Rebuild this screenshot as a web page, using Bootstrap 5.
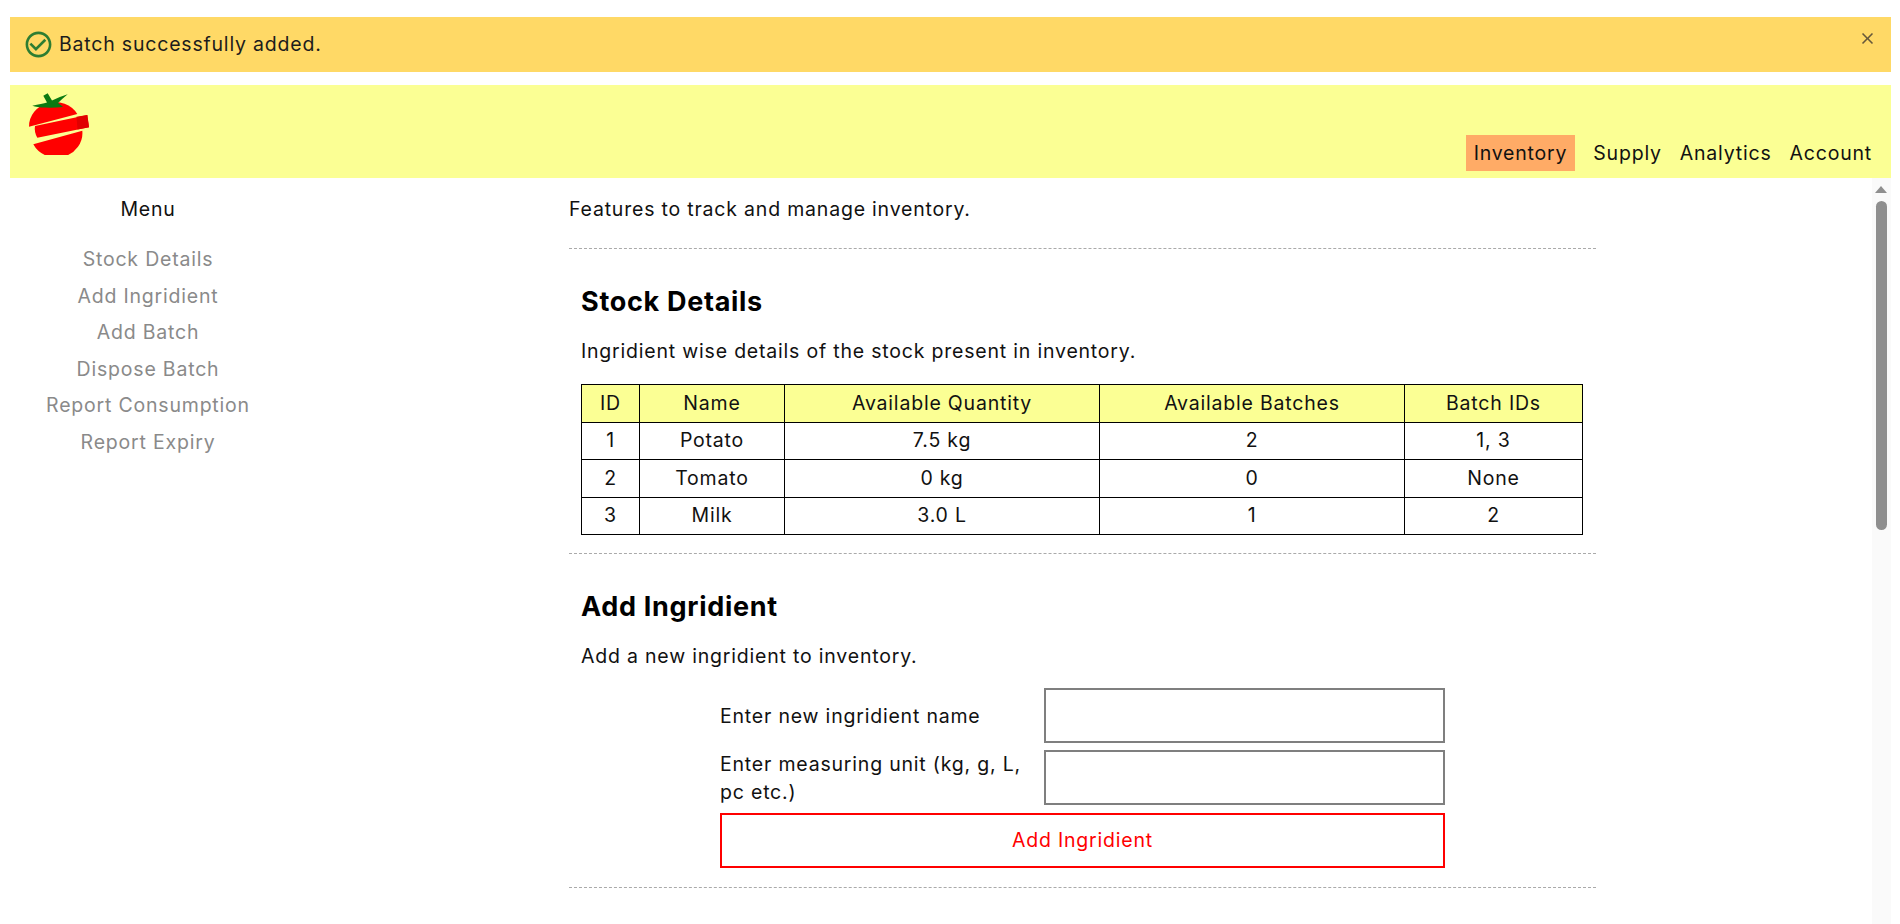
<!DOCTYPE html>
<html lang="en">
<head>
    <meta charset="UTF-8">
    <meta name="viewport" content="width=device-width, initial-scale=1.0">
    <title>Inventory</title>
    <link href="https://cdn.jsdelivr.net/npm/bootstrap@5.3.0/dist/css/bootstrap.min.css" rel="stylesheet">
    <style>
        html, body {
            height: 100%;
        }
        body {
            font-family: "Inter", "Open Sans", sans-serif;
            font-size: 19.5px;
            letter-spacing: .8px;
            color: #111;
            background-color: #fff;
            overflow: hidden;
        }
        .page-wrap {
            height: 100vh;
            padding: 17px 9px 0 10px;
        }
        .notice-bar {
            height: 55px;
            margin-bottom: 13px;
            padding: 0 15px;
            background-color: #ffd966;
            border: 0;
            border-radius: 0;
            color: #1c1c1c;
        }
        .notice-close {
            border: 0;
            padding: 0;
            background: none;
            line-height: 0;
            margin-top: -12px;
            margin-right: -1px;
        }
        .top-bar {
            height: 93px;
            padding: 0 11px 7px 0;
            background-color: #fbff94;
        }
        .logo-box {
            margin: 6px 0 0 17px;
        }
        .top-link {
            display: block;
            height: 36px;
            line-height: 36px;
            padding: 0 8px;
            margin-left: 2px;
            color: #111;
            text-decoration: none;
        }
        .top-link.is-current {
            background-color: #ffab66;
            margin-right: 8px;
        }
        .side-menu {
            width: 276px;
            padding-top: 17px;
        }
        .side-title {
            line-height: 28px;
            margin-bottom: 18px;
        }
        .side-link {
            display: block;
            height: 36.6px;
            line-height: 36.6px;
            color: #8a8a8a;
            text-decoration: none;
        }
        .pane-inner {
            width: 1027px;
            margin-left: 283px;
            padding-top: 17px;
        }
        .intro-line {
            line-height: 28px;
            margin: 0 0 25px;
        }
        .stock-block {
            border-top: 1px dashed #aaa;
            padding: 0 12px;
        }
        .stock-block h2 {
            font-family: inherit;
            font-size: 27px;
            font-weight: 700;
            line-height: 32px;
            letter-spacing: .7px;
            color: #000;
            margin: 37px 0 0;
        }
        .block-note {
            line-height: 28px;
            margin: 19px 0 19px;
        }
        .stock-table {
            width: 1001px;
            margin: 0 0 18px;
            table-layout: fixed;
            border-color: #000;
            font-size: inherit;
        }
        .stock-table th, .stock-table td {
            padding: 0;
            height: 37.5px;
            vertical-align: middle;
            text-align: center;
            font-weight: 400;
            color: #111;
            border-color: #000;
        }
        .stock-table thead th {
            background-color: #fbff94;
        }
        .entry-grid {
            display: grid;
            grid-template-columns: 324px 1fr;
            row-gap: 7px;
            width: 725px;
            margin: -1px 0 19px 139px;
        }
        .entry-label {
            line-height: 28px;
            margin: 0;
            padding-right: 10px;
            align-self: center;
        }
        .entry-input {
            height: 55px;
            border: 2px solid #7f7f7f;
            border-radius: 0;
        }
        .entry-submit {
            grid-column: 1 / 3;
            height: 55px;
            border: 2px solid #f00;
            border-radius: 0;
            color: #f00;
            background-color: #fff;
            font-size: inherit;
            letter-spacing: inherit;
        }
        .fake-scrollbar {
            width: 19px;
            background-color: #fafafa;
        }
        .scroll-up {
            width: 0;
            margin: 8px 0 8px 3px;
            border-left: 6.5px solid transparent;
            border-right: 6.5px solid transparent;
            border-bottom: 7px solid #8f8f8f;
        }
        .scroll-thumb {
            width: 11px;
            height: 329px;
            margin-left: 4px;
            background-color: #8f8f8f;
            border-radius: 6px;
        }
    </style>
</head>
<body>
    <div class="page-wrap d-flex flex-column">
        <div class="alert notice-bar d-flex align-items-center gap-2 flex-shrink-0" role="alert">
            <svg width="31" height="31" viewBox="0 0 24 24" fill="#2e7d32" class="flex-shrink-0" style="margin-left:-2px">
                <path d="M16.59 7.58 10 14.17l-3.59-3.58L5 12l5 5 8-8zM12 2C6.48 2 2 6.48 2 12s4.48 10 10 10 10-4.48 10-10S17.52 2 12 2zm0 18c-4.42 0-8-3.58-8-8s3.58-8 8-8 8 3.58 8 8-3.58 8-8 8z"/>
            </svg>
            <span class="flex-grow-1" style="margin-left:-3px">Batch successfully added.</span>
            <button type="button" class="notice-close" aria-label="Close">
                <svg width="19" height="19" viewBox="0 0 24 24" fill="#66583a">
                    <path d="M19 6.41 17.59 5 12 10.59 6.41 5 5 6.41 10.59 12 5 17.59 6.41 19 12 13.41 17.59 19 19 17.59 13.41 12z"/>
                </svg>
            </button>
        </div>

        <nav class="top-bar d-flex align-items-end justify-content-between flex-shrink-0">
            <div class="logo-box align-self-start">
                <svg width="66" height="64" viewBox="0 0 66 64">
                    <path d="M2 35.7A26 24.5 0 0 1 50.3 23Z" fill="#f00"/>
                    <path d="M8 35 60.3 24 62 36.3 10.3 46.7Q7 41 8 35Z" fill="#f00"/>
                    <path d="M49.5 25.7 60.3 24 62 36.3 50.5 38.6Z" fill="#e00000"/>
                    <path d="M6.3 53.3 55.3 39.7A26 24.5 0 0 1 6.3 53.3Z" fill="#f00"/>
                    <path d="M5.3 14.7Q15 13 20 11.5L16.3 4.7 20.7 2.3 25 9.5Q32 6 40.7 3.3 35 8 31 12 34 14 36 16 25 17 18 16.5 10 16.5 5.3 14.7Z" fill="#0b7a12"/>
                </svg>
            </div>
            <div class="d-flex">
                <a class="top-link is-current" href="#">Inventory</a>
                <a class="top-link" href="#">Supply</a>
                <a class="top-link" href="#">Analytics</a>
                <a class="top-link" href="#">Account</a>
            </div>
        </nav>

        <div class="d-flex flex-grow-1" style="min-height:0">
            <aside class="side-menu text-center flex-shrink-0">
                <div class="side-title">Menu</div>
                <a class="side-link" href="#">Stock Details</a>
                <a class="side-link" href="#">Add Ingridient</a>
                <a class="side-link" href="#">Add Batch</a>
                <a class="side-link" href="#">Dispose Batch</a>
                <a class="side-link" href="#">Report Consumption</a>
                <a class="side-link" href="#">Report Expiry</a>
            </aside>

            <main class="flex-grow-1 overflow-hidden">
                <div class="pane-inner">
                    <p class="intro-line">Features to track and manage inventory.</p>

                    <section class="stock-block">
                        <h2>Stock Details</h2>
                        <p class="block-note">Ingridient wise details of the stock present in inventory.</p>
                        <table class="table table-bordered stock-table">
                            <colgroup>
                                <col style="width:58px">
                                <col style="width:145px">
                                <col style="width:315px">
                                <col style="width:305px">
                                <col style="width:178px">
                            </colgroup>
                            <thead>
                                <tr><th>ID</th><th>Name</th><th>Available Quantity</th><th>Available Batches</th><th>Batch IDs</th></tr>
                            </thead>
                            <tbody>
                                <tr><td>1</td><td>Potato</td><td>7.5 kg</td><td>2</td><td>1, 3</td></tr>
                                <tr><td>2</td><td>Tomato</td><td>0 kg</td><td>0</td><td>None</td></tr>
                                <tr><td>3</td><td>Milk</td><td>3.0 L</td><td>1</td><td>2</td></tr>
                            </tbody>
                        </table>
                    </section>

                    <section class="stock-block">
                        <h2>Add Ingridient</h2>
                        <p class="block-note">Add a new ingridient to inventory.</p>
                        <form class="entry-grid">
                            <label class="entry-label" for="ingName">Enter new ingridient name</label>
                            <input id="ingName" class="form-control entry-input" type="text">
                            <label class="entry-label" for="ingUnit">Enter measuring unit (kg, g, L, pc etc.)</label>
                            <input id="ingUnit" class="form-control entry-input" type="text">
                            <button type="button" class="btn entry-submit">Add Ingridient</button>
                        </form>
                    </section>

                    <section class="stock-block"></section>
                </div>
            </main>

            <div class="fake-scrollbar flex-shrink-0" aria-hidden="true">
                <div class="scroll-up"></div>
                <div class="scroll-thumb"></div>
            </div>
        </div>
    </div>
</body>
</html>
